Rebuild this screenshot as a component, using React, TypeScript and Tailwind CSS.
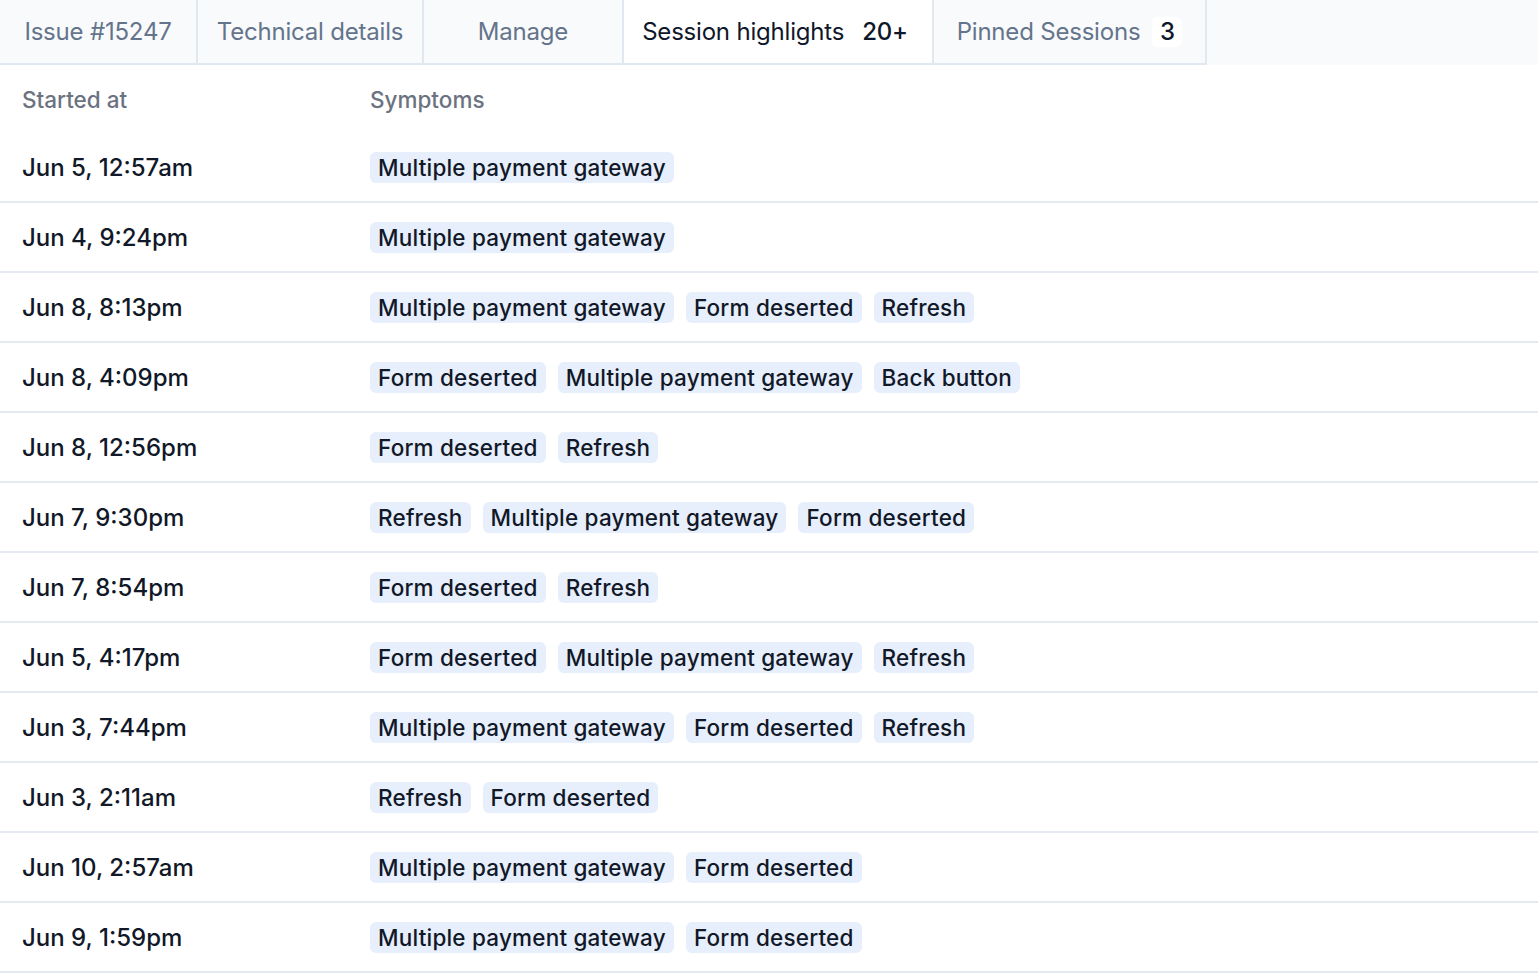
const TABS = [
  { label: 'Issue #15247', w: 'w-[198px]' },
  { label: 'Technical details', w: 'w-[226px]' },
  { label: 'Manage', w: 'w-[200px]' },
  { label: 'Session highlights', w: 'w-[310px]', active: true, count: '20+' },
  { label: 'Pinned Sessions', w: 'w-[273px]', count: '3' },
]

const ROWS: { at: string; symptoms: string[] }[] = [
  { at: 'Jun 5, 12:57am', symptoms: ['Multiple payment gateway'] },
  { at: 'Jun 4, 9:24pm', symptoms: ['Multiple payment gateway'] },
  { at: 'Jun 8, 8:13pm', symptoms: ['Multiple payment gateway', 'Form deserted', 'Refresh'] },
  { at: 'Jun 8, 4:09pm', symptoms: ['Form deserted', 'Multiple payment gateway', 'Back button'] },
  { at: 'Jun 8, 12:56pm', symptoms: ['Form deserted', 'Refresh'] },
  { at: 'Jun 7, 9:30pm', symptoms: ['Refresh', 'Multiple payment gateway', 'Form deserted'] },
  { at: 'Jun 7, 8:54pm', symptoms: ['Form deserted', 'Refresh'] },
  { at: 'Jun 5, 4:17pm', symptoms: ['Form deserted', 'Multiple payment gateway', 'Refresh'] },
  { at: 'Jun 3, 7:44pm', symptoms: ['Multiple payment gateway', 'Form deserted', 'Refresh'] },
  { at: 'Jun 3, 2:11am', symptoms: ['Refresh', 'Form deserted'] },
  { at: 'Jun 10, 2:57am', symptoms: ['Multiple payment gateway', 'Form deserted'] },
  { at: 'Jun 9, 1:59pm', symptoms: ['Multiple payment gateway', 'Form deserted'] },
]

export default function App() {
  return (
    <div className="min-h-screen bg-white font-['Inter',sans-serif] antialiased">
      {/* Tab bar */}
      <div className="flex h-[65px] bg-[#f8fafc]">
        <div className="flex border-b-2 border-[#e2e8f0]">
          {TABS.map((t) => (
            <div
              key={t.label}
              className={`flex ${t.w} items-center justify-center gap-[12px] border-r-2 border-[#e2e8f0] pt-[1px] text-[24px] tracking-[-0.2px] ${
                t.active ? 'bg-white text-[#0f172a]' : 'text-[#64748b]'
              }`}
            >
              <span>{t.label}</span>
              {t.count && (
                <span className="flex h-[30px] min-w-[30px] items-center justify-center rounded-md bg-white px-[6px] font-medium text-[#0f172a]">
                  {t.count}
                </span>
              )}
            </div>
          ))}
        </div>
      </div>

      {/* Table */}
      <div className="flex h-[68px] items-center pt-[2px] text-[22.5px] font-medium text-[#6b7280]">
        <div className="w-[370px] pl-[22px]">Started at</div>
        <div>Symptoms</div>
      </div>
      {ROWS.map((r) => (
        <div key={r.at} className="flex h-[70px] items-center border-b-2 border-[#e5e9f0]">
          <div className="w-[370px] pl-[22px] pt-[1px] text-[24px] font-medium text-[#111827]">{r.at}</div>
          <div className="flex gap-[12px]">
            {r.symptoms.map((s, i) => (
              <span
                key={i}
                className="flex h-[31px] items-center rounded-[6px] bg-[#e7eefc] px-[8px] pt-[1px] text-[22.5px] font-medium tracking-[0.2px] text-[#111827]"
              >
                {s}
              </span>
            ))}
          </div>
        </div>
      ))}
    </div>
  )
}
